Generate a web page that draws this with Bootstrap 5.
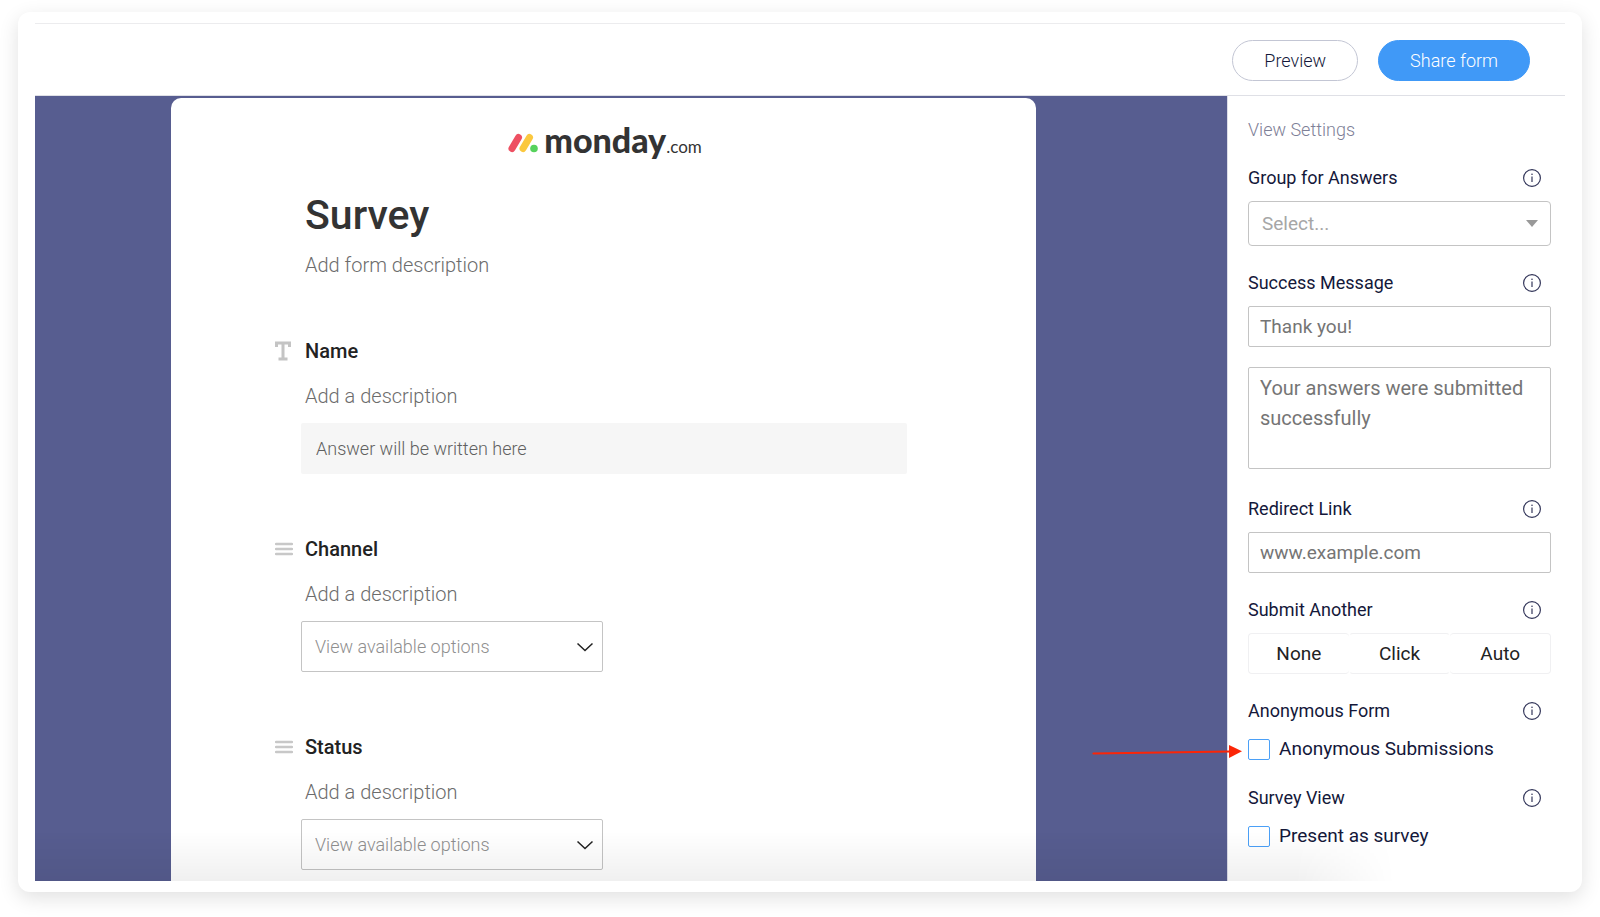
<!DOCTYPE html>
<html lang="en">
<head>
<meta charset="utf-8">
<meta name="viewport" content="width=device-width, initial-scale=1">
<title>Survey form editor</title>
<link href="https://cdn.jsdelivr.net/npm/bootstrap@5.3.0/dist/css/bootstrap.min.css" rel="stylesheet">
<style>
  body { font-family: Roboto, "Liberation Sans", sans-serif; color: #333; background: #fff; }
  .page-wrap { padding: 12px 18px 25px; }
  .window { border-radius: 12px; padding: 11px 17px; background: #fff; box-shadow: 0 6px 20px rgba(0,0,0,.12); }
  .topbar { border-top: 1px solid #ececee; border-bottom: 1px solid #dfe0e6; padding: 16px 35px 14px; gap: 20px; }
  .topbar .btn { height: 41px; border-radius: 21px; font-size: 18px; font-weight: 300; line-height: 24px; padding: 0 31px; }
  .topbar .btn-preview { border: 1px solid #c3c6d4; color: #14183a; background: #fff; }
  .topbar .btn-share { background: #4099f7; color: #fff; border: 1px solid #4099f7; }

  .canvas { background: #575d90; padding: 2px 191px 0 136px; min-width: 0; }
  .form-sheet { background: #fff; border-radius: 10px 10px 0 0; padding: 24px 129px 9px 104px; }
  .brand { height: 42px; gap: 6px; color: #333; padding-left: 28px; }
  .brand-name { font: 900 34px/42px Lato, sans-serif; }
  .brand-tld { font: 400 17px/42px Lato, sans-serif; }
  .form-title { font-size: 41px; font-weight: 500; line-height: 50px; margin: 26px 0 10px 30px; color: #333; }
  .hint { font-size: 20px; font-weight: 300; line-height: 30px; color: #6c6c6c; margin: 0; }
  .form-title + .hint { margin-left: 30px; margin-bottom: 56px; }
  .field { display: grid; grid-template-columns: 26px 1fr; margin-bottom: 60px; }
  .field:last-child { margin-bottom: 0; }
  .field > svg { margin-top: 5px; }
  .field-title { font-size: 20px; font-weight: 500; line-height: 30px; margin: 0 4px 15px; color: #222; }
  .field .hint { margin: 0 4px 12px; }
  .field .form-control, .field .form-select { height: 51px; border-radius: 2px; font-size: 18px; font-weight: 300; }
  .field .form-control { background: #f6f6f6; border: 0; padding: 0 15px; }
  .field .form-control::placeholder { color: #606060; }
  .field .form-select { width: 302px; border: 1px solid #c4c4c4; color: #8f8f8f; padding: 0 40px 0 13px; background-color: transparent;
    background-image: url("data:image/svg+xml,%3Csvg xmlns='http://www.w3.org/2000/svg' viewBox='0 0 18 12'%3E%3Cpath d='M1.500 2.500 9 9.500 16.500 2.500' fill='none' stroke='%23222' stroke-width='1.500'/%3E%3C/svg%3E");
    background-size: 18px 12px; background-position: right 8px center; }

  .settings { width: 338px; padding: 22px 14px 0 20px; border-left: 1px solid #dcdde8; color: #14183a; }
  .settings-heading { font-size: 18px; font-weight: 300; line-height: 24px; color: #7e8097; margin: 0 0 24px; }
  .setting { margin-bottom: 25px; }
  .setting-long { padding-bottom: 3px; }
  .setting-head { height: 24px; margin-bottom: 11px; padding-right: 10px; }
  .setting-head label, .setting-head span { font-size: 18px; line-height: 24px; }
  .info { border: 0; background: none; padding: 0; width: 18px; height: 18px; display: flex; }
  .settings .form-control, .settings .form-select { font-size: 19px; line-height: 30px; border: 1px solid #c4c4c4; border-radius: 2px; background-color: transparent; }
  .settings .form-control { padding: 0 11px; height: 41px; }
  .settings .form-control::placeholder { color: #757575; }
  .settings textarea.form-control { height: 102px; font-size: 20px; padding: 5px 11px; margin: 20px 0 0; resize: none; }
  .settings .form-select { height: 45px; border-radius: 4px; padding: 0 40px 0 13px; color: #a6a6a6;
    background-image: url("data:image/svg+xml,%3Csvg xmlns='http://www.w3.org/2000/svg' viewBox='0 0 12 7'%3E%3Cpath d='M0 0H12L6 7Z' fill='%23999'/%3E%3C/svg%3E");
    background-size: 12px 7px; background-position: right 12px center; }
  .choices .btn { height: 41px; border: 1px solid #f0f0f2; font-size: 19px; line-height: 30px; padding: 0; color: #222; border-radius: 4px; }
  .choices .btn:first-child { border-right: 0; }
  .choices .btn:last-child { border-left: 0; }
  .choices .btn:nth-child(2) { border-left-color: transparent; border-right-color: transparent; }
  .tick { height: 24px; gap: 9px; font-size: 19px; line-height: 24px; margin-top: 14px; }
  .tick .form-check-input { width: 22px; height: 21px; margin: 0; border: 1px solid #4ba0f7; border-radius: 2px; flex: none; }
  .pointer { position: absolute; right: calc(100% + 6px); top: 8px; }
  .bottom-fade { position: absolute; left: 0; right: 170px; bottom: 0; height: 50px; pointer-events: none;
    background: linear-gradient(rgba(0,0,0,0), rgba(0,0,0,.06));
    -webkit-mask-image: linear-gradient(to left, transparent, #000 100px); mask-image: linear-gradient(to left, transparent, #000 100px); }
</style>
</head>
<body>
<svg class="d-none" aria-hidden="true">
  <symbol id="info-icon" viewBox="0 0 18 18">
    <circle cx="9" cy="9" r="8.400" fill="none" stroke="#33365a" stroke-width="1.200"/>
    <path d="M9 7.500V13" stroke="#33365a" stroke-width="1.200"/>
    <circle cx="9" cy="5.200" r=".8" fill="#33365a"/>
  </symbol>
  <symbol id="list-icon" viewBox="0 0 18 20">
    <path d="M1 5H17M1 10H17M1 15H17" stroke="#c8c8c8" stroke-width="2.400" stroke-linecap="round"/>
  </symbol>
</svg>

<div class="page-wrap min-vh-100 d-flex flex-column">
  <div class="window flex-grow-1 d-flex flex-column">
    <header class="topbar d-flex justify-content-end">
      <button type="button" class="btn btn-preview">Preview</button>
      <button type="button" class="btn btn-share">Share form</button>
    </header>

    <div class="d-flex flex-grow-1 position-relative">
      <main class="canvas flex-grow-1 d-flex flex-column">
        <div class="form-sheet flex-grow-1">
          <div class="brand d-flex align-items-center justify-content-center">
            <svg width="30" height="20" viewBox="0 0 30 20" aria-hidden="true">
              <path d="M4 15.500 10.500 4.500" stroke="#ee5062" stroke-width="7" stroke-linecap="round"/>
              <path d="M15 15.500 21.500 4.500" stroke="#fbc83f" stroke-width="7" stroke-linecap="round"/>
              <circle cx="26" cy="15.500" r="3.800" fill="#56d25c"/>
            </svg>
            <div class="d-flex align-items-baseline"><span class="brand-name">monday</span><span class="brand-tld">.com</span></div>
          </div>
          <h1 class="form-title">Survey</h1>
          <p class="hint">Add form description</p>

          <section class="field">
            <svg width="16" height="20" viewBox="0 0 16 20" aria-hidden="true"><path d="M1.500 6V2H14.500V6M8 2V18M3.500 18H12.500" fill="none" stroke="#c4c4c4" stroke-width="3"/></svg>
            <div>
              <h2 class="field-title"><label for="f-name">Name</label></h2>
              <p class="hint">Add a description</p>
              <input id="f-name" class="form-control" type="text" placeholder="Answer will be written here" readonly>
            </div>
          </section>
          <section class="field">
            <svg width="18" height="20"><use href="#list-icon"/></svg>
            <div>
              <h2 class="field-title"><label for="f-channel">Channel</label></h2>
              <p class="hint">Add a description</p>
              <select id="f-channel" class="form-select"><option>View available options</option></select>
            </div>
          </section>
          <section class="field">
            <svg width="18" height="20"><use href="#list-icon"/></svg>
            <div>
              <h2 class="field-title"><label for="f-status">Status</label></h2>
              <p class="hint">Add a description</p>
              <select id="f-status" class="form-select"><option>View available options</option></select>
            </div>
          </section>
        </div>
      </main>

      <aside class="settings flex-shrink-0">
        <h2 class="settings-heading">View Settings</h2>

        <div class="setting">
          <div class="setting-head d-flex align-items-center justify-content-between">
            <label for="s-group">Group for Answers</label>
            <button type="button" class="info" aria-label="About group for answers"><svg width="18" height="18"><use href="#info-icon"/></svg></button>
          </div>
          <select id="s-group" class="form-select"><option>Select...</option></select>
        </div>

        <div class="setting setting-long">
          <div class="setting-head d-flex align-items-center justify-content-between">
            <label for="s-success">Success Message</label>
            <button type="button" class="info" aria-label="About success message"><svg width="18" height="18"><use href="#info-icon"/></svg></button>
          </div>
          <input id="s-success" class="form-control" type="text" placeholder="Thank you!">
          <textarea class="form-control" aria-label="Success text" placeholder="Your answers were submitted successfully"></textarea>
        </div>

        <div class="setting">
          <div class="setting-head d-flex align-items-center justify-content-between">
            <label for="s-link">Redirect Link</label>
            <button type="button" class="info" aria-label="About redirect link"><svg width="18" height="18"><use href="#info-icon"/></svg></button>
          </div>
          <input id="s-link" class="form-control" type="url" placeholder="www.example.com">
        </div>

        <div class="setting">
          <div class="setting-head d-flex align-items-center justify-content-between">
            <span id="s-again">Submit Another</span>
            <button type="button" class="info" aria-label="About submit another"><svg width="18" height="18"><use href="#info-icon"/></svg></button>
          </div>
          <div class="choices d-flex" role="group" aria-labelledby="s-again">
            <button type="button" class="btn col">None</button>
            <button type="button" class="btn col">Click</button>
            <button type="button" class="btn col">Auto</button>
          </div>
        </div>

        <div class="setting">
          <div class="setting-head d-flex align-items-center justify-content-between">
            <span>Anonymous Form</span>
            <button type="button" class="info" aria-label="About anonymous form"><svg width="18" height="18"><use href="#info-icon"/></svg></button>
          </div>
          <div class="tick d-flex align-items-center position-relative">
            <svg class="pointer" width="150" height="13" viewBox="0 0 150 13" aria-hidden="true">
              <path d="M1.500 8.500 138 6.500" stroke="#fb2507" stroke-width="2.200" stroke-linecap="round"/>
              <path d="M137 0 150 6.300 137 13Z" fill="#fb2507"/>
            </svg>
            <input class="form-check-input" type="checkbox" id="s-anon">
            <label for="s-anon">Anonymous Submissions</label>
          </div>
        </div>

        <div class="setting mb-0">
          <div class="setting-head d-flex align-items-center justify-content-between">
            <span>Survey View</span>
            <button type="button" class="info" aria-label="About survey view"><svg width="18" height="18"><use href="#info-icon"/></svg></button>
          </div>
          <div class="tick d-flex align-items-center">
            <input class="form-check-input" type="checkbox" id="s-survey">
            <label for="s-survey">Present as survey</label>
          </div>
        </div>
      </aside>
      <div class="bottom-fade"></div>
    </div>
  </div>
</div>
<script src="https://cdn.jsdelivr.net/npm/bootstrap@5.3.0/dist/js/bootstrap.bundle.min.js"></script>
</body>
</html>
